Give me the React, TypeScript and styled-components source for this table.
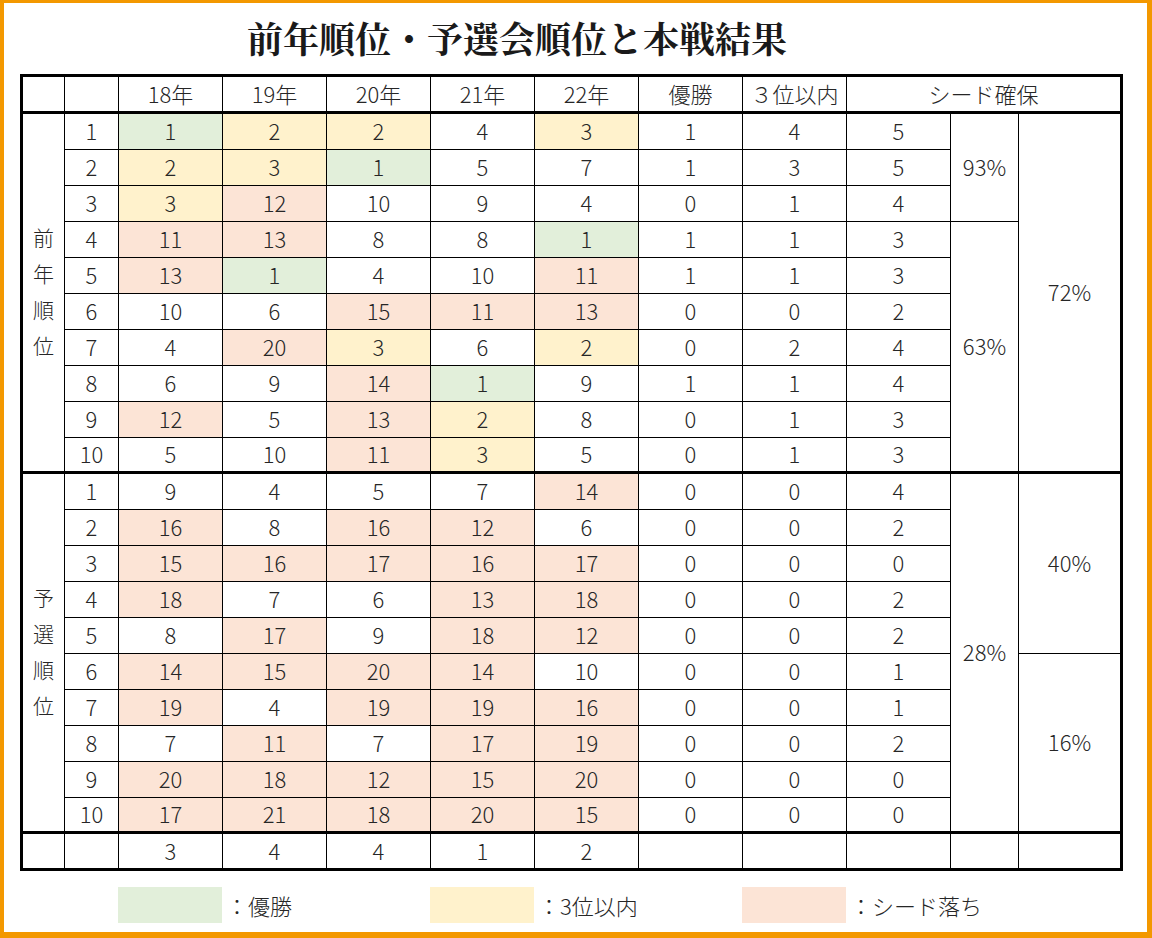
import React from 'react';
import styled, { createGlobalStyle } from 'styled-components';

const GlobalStyle = createGlobalStyle`
  html, body {
    margin: 0;
    padding: 0;
    background: #fff;
  }
  body {
    font-family: "Noto Sans CJK JP", "Noto Sans", sans-serif;
    color: #262626;
  }
`;

const GREEN = '#E2EFDA';
const YELLOW = '#FFF2CC';
const PINK = '#FCE4D6';

const Page = styled.div`
  box-sizing: border-box;
  width: 1152px;
  height: 938px;
  border-style: solid;
  border-color: #f39800;
  border-width: 3px 5px 6px 4px;
  background: #fff;
`;

const Title = styled.h1`
  margin: 0;
  height: 71px;
  padding: 0 117px 2px 0;
  box-sizing: border-box;
  display: flex;
  align-items: center;
  justify-content: center;
  font-family: "Noto Serif CJK JP", "Noto Sans CJK JP", serif;
  font-size: 36px;
  font-weight: 700;
  color: #1a1a1a;
`;

const Grid = styled.div`
  box-sizing: border-box;
  margin-left: 16px;
  width: 1103px;
  display: grid;
  grid-template-columns: 42px 54px repeat(8, 104px) 68px 101px;
  grid-template-rows: 37px repeat(20, 36px) 34px;
  border: 3px solid #000;
`;

interface CellProps {
    $bg?: string;
    $bottom?: number;
    $last?: boolean;
    $rows?: number;
    $cols?: number;
}

const Cell = styled.div<CellProps>`
  box-sizing: border-box;
  display: flex;
  align-items: center;
  justify-content: center;
  padding-bottom: 3px;
  border-right: ${(p) => (p.$last ? 'none' : '1px solid #000')};
  border-bottom: ${(p) => (p.$bottom ?? 1)}px solid #000;
  background: ${(p) => p.$bg ?? '#fff'};
  grid-row: span ${(p) => p.$rows ?? 1};
  grid-column: span ${(p) => p.$cols ?? 1};
  font-size: 22px;
  font-weight: 300;
  line-height: 1;
`;

// narrow box so each character wraps onto its own line
const SideLabel = styled.span`
  width: 22px;
  font-size: 21px;
  line-height: 36px;
  word-break: break-all;
  text-align: center;
`;

const Legend = styled.div`
  display: flex;
  margin: 16px 0 0 114px;
`;

const LegendItem = styled.div`
  width: 312px;
  display: flex;
  align-items: center;
  gap: 4px;
  font-size: 22px;
  font-weight: 300;
`;

const Swatch = styled.div<{ $bg: string }>`
  width: 104px;
  height: 36px;
  background: ${(p) => p.$bg};
`;

interface Section {
    label: string;
    rows: number[][];
}

const sections: Section[] = [
    {
        label: '前年順位',
        rows: [
            [1, 2, 2, 4, 3, 1, 4, 5],
            [2, 3, 1, 5, 7, 1, 3, 5],
            [3, 12, 10, 9, 4, 0, 1, 4],
            [11, 13, 8, 8, 1, 1, 1, 3],
            [13, 1, 4, 10, 11, 1, 1, 3],
            [10, 6, 15, 11, 13, 0, 0, 2],
            [4, 20, 3, 6, 2, 0, 2, 4],
            [6, 9, 14, 1, 9, 1, 1, 4],
            [12, 5, 13, 2, 8, 0, 1, 3],
            [5, 10, 11, 3, 5, 0, 1, 3],
        ],
    },
    {
        label: '予選順位',
        rows: [
            [9, 4, 5, 7, 14, 0, 0, 4],
            [16, 8, 16, 12, 6, 0, 0, 2],
            [15, 16, 17, 16, 17, 0, 0, 0],
            [18, 7, 6, 13, 18, 0, 0, 2],
            [8, 17, 9, 18, 12, 0, 0, 2],
            [14, 15, 20, 14, 10, 0, 0, 1],
            [19, 4, 19, 19, 16, 0, 0, 1],
            [7, 11, 7, 17, 19, 0, 0, 2],
            [20, 18, 12, 15, 20, 0, 0, 0],
            [17, 21, 18, 20, 15, 0, 0, 0],
        ],
    },
];

// merged percentage cells, placed at their first row
const spans: { s: number; r: number; col: 10 | 11; rows: number; text: string }[] = [
    { s: 0, r: 0, col: 10, rows: 3, text: '93%' },
    { s: 0, r: 0, col: 11, rows: 10, text: '72%' },
    { s: 0, r: 3, col: 10, rows: 7, text: '63%' },
    { s: 1, r: 0, col: 10, rows: 10, text: '28%' },
    { s: 1, r: 0, col: 11, rows: 5, text: '40%' },
    { s: 1, r: 5, col: 11, rows: 5, text: '16%' },
];

const years = ['18年', '19年', '20年', '21年', '22年'];
const totals = [3, 4, 4, 1, 2];

const rankColour = (v: number): string | undefined => {
    if (v === 1) return GREEN;
    if (v <= 3) return YELLOW;
    if (v >= 11) return PINK;
    return undefined;
};

export default function App() {
    return (
        <>
            <GlobalStyle />
            <Page>
                <Title>前年順位・予選会順位と本戦結果</Title>
                <Grid>
                    <Cell $bottom={3} />
                    <Cell $bottom={3} />
                    {years.map((y) => (
                        <Cell key={y} $bottom={3}>{y}</Cell>
                    ))}
                    <Cell $bottom={3}>優勝</Cell>
                    <Cell $bottom={3}>３位以内</Cell>
                    <Cell $bottom={3} $cols={3} $last>シード確保</Cell>

                    {sections.map((sec, s) =>
                        sec.rows.map((row, r) => {
                            const bottom = r === 9 ? 3 : 1;
                            return (
                                <React.Fragment key={`${s}-${r}`}>
                                    {r === 0 && (
                                        <Cell $rows={10} $bottom={3}>
                                            <SideLabel>{sec.label}</SideLabel>
                                        </Cell>
                                    )}
                                    <Cell $bottom={bottom}>{r + 1}</Cell>
                                    {row.slice(0, 5).map((v, i) => (
                                        <Cell key={i} $bottom={bottom} $bg={rankColour(v)}>{v}</Cell>
                                    ))}
                                    {row.slice(5).map((v, i) => (
                                        <Cell key={`c${i}`} $bottom={bottom}>{v}</Cell>
                                    ))}
                                    {spans
                                        .filter((m) => m.s === s && m.r === r)
                                        .map((m) => (
                                            <Cell
                                                key={m.text}
                                                $rows={m.rows}
                                                $bottom={m.r + m.rows === 10 ? 3 : 1}
                                                $last={m.col === 11}
                                            >
                                                {m.text}
                                            </Cell>
                                        ))}
                                </React.Fragment>
                            );
                        })
                    )}

                    <Cell $bottom={0} />
                    <Cell $bottom={0} />
                    {totals.map((t, i) => (
                        <Cell key={`t${i}`} $bottom={0}>{t}</Cell>
                    ))}
                    <Cell $bottom={0} />
                    <Cell $bottom={0} />
                    <Cell $bottom={0} />
                    <Cell $bottom={0} />
                    <Cell $bottom={0} $last />
                </Grid>
                <Legend>
                    <LegendItem>
                        <Swatch $bg={GREEN} />
                        <span>：優勝</span>
                    </LegendItem>
                    <LegendItem>
                        <Swatch $bg={YELLOW} />
                        <span>：3位以内</span>
                    </LegendItem>
                    <LegendItem>
                        <Swatch $bg={PINK} />
                        <span>：シード落ち</span>
                    </LegendItem>
                </Legend>
            </Page>
        </>
    );
}
